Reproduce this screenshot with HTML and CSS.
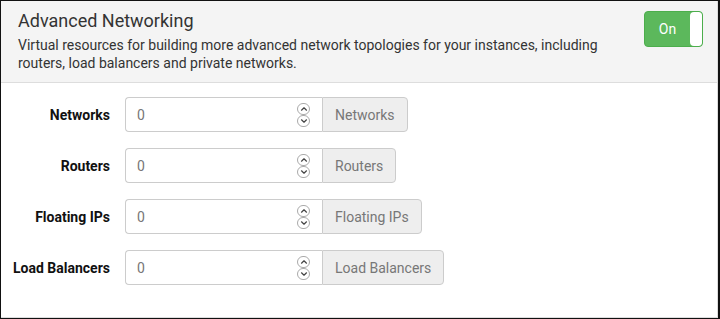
FILE: index.html
```html
<!DOCTYPE html>
<html lang="en">
<head>
  <meta charset="UTF-8" />
  <title>Advanced Networking</title>
  <link rel="stylesheet" href="styles.css">
</head>
<body>
  <div class="frame">
    <div class="panel">
      <div class="panel-head">
        <div class="head-text">
          <h2>Advanced Networking</h2>
          <p>Virtual resources for building more advanced network topologies for your instances, including routers, load balancers and private networks.</p>
        </div>
        <div class="toggle">
          <span class="toggle-label">On</span>
          <span class="toggle-knob"></span>
        </div>
      </div>

      <div class="panel-body">
        <label for="networks">Networks</label>
        <div class="input-group">
          <div class="field">
            <input type="number" id="networks" value="0" />
            <span class="spinner">
              <span class="spin"><svg viewBox="0 0 8 6" width="8" height="6"><path d="M1.5 4.2 L4 1.8 L6.5 4.2" /></svg></span>
              <span class="spin"><svg viewBox="0 0 8 6" width="8" height="6"><path d="M1.5 1.8 L4 4.2 L6.5 1.8" /></svg></span>
            </span>
          </div>
          <span class="addon">Networks</span>
        </div>

        <label for="routers">Routers</label>
        <div class="input-group">
          <div class="field">
            <input type="number" id="routers" value="0" />
            <span class="spinner">
              <span class="spin"><svg viewBox="0 0 8 6" width="8" height="6"><path d="M1.5 4.2 L4 1.8 L6.5 4.2" /></svg></span>
              <span class="spin"><svg viewBox="0 0 8 6" width="8" height="6"><path d="M1.5 1.8 L4 4.2 L6.5 1.8" /></svg></span>
            </span>
          </div>
          <span class="addon">Routers</span>
        </div>

        <label for="fips">Floating IPs</label>
        <div class="input-group">
          <div class="field">
            <input type="number" id="fips" value="0" />
            <span class="spinner">
              <span class="spin"><svg viewBox="0 0 8 6" width="8" height="6"><path d="M1.5 4.2 L4 1.8 L6.5 4.2" /></svg></span>
              <span class="spin"><svg viewBox="0 0 8 6" width="8" height="6"><path d="M1.5 1.8 L4 4.2 L6.5 1.8" /></svg></span>
            </span>
          </div>
          <span class="addon">Floating IPs</span>
        </div>

        <label for="lbs">Load Balancers</label>
        <div class="input-group">
          <div class="field">
            <input type="number" id="lbs" value="0" />
            <span class="spinner">
              <span class="spin"><svg viewBox="0 0 8 6" width="8" height="6"><path d="M1.5 4.2 L4 1.8 L6.5 4.2" /></svg></span>
              <span class="spin"><svg viewBox="0 0 8 6" width="8" height="6"><path d="M1.5 1.8 L4 4.2 L6.5 1.8" /></svg></span>
            </span>
          </div>
          <span class="addon">Load Balancers</span>
        </div>
      </div>
    </div>
  </div>
</body>
</html>
```

FILE: styles.css
```css
html, body {
  margin: 0;
  height: 100%;
}
body {
  font-family: Roboto, "Liberation Sans", sans-serif;
  color: #333;
  background: #fff;
}
.frame {
  box-sizing: border-box;
  height: 319px;
  border: 1px solid #111;
  border-right-width: 2px;
}
.panel {
  box-sizing: border-box;
  height: 100%;
  border: 1px solid #ddd;
  border-top: none;
  border-left: none;
}
.panel-head {
  display: flex;
  justify-content: space-between;
  align-items: flex-start;
  background: #f4f4f4;
  border-bottom: 1px solid #ddd;
  padding: 9px 14px 10px 17px;
}
.head-text h2 {
  margin: 0 0 4px;
  font-size: 18px;
  font-weight: 400;
  line-height: 22px;
}
.head-text p {
  margin: 0;
  font-size: 14px;
  line-height: 18px;
  max-width: 600px;
}
.toggle {
  display: flex;
  box-sizing: border-box;
  width: 59px;
  height: 36px;
  margin-top: 1px;
  background: #5cb85c;
  border: 1px solid #4cae4c;
  border-radius: 4px;
  overflow: hidden;
}
.toggle-label {
  flex: 1;
  color: #fff;
  font-size: 14px;
  line-height: 34px;
  text-align: center;
}
.toggle-knob {
  width: 12px;
  background: #fff;
  border-radius: 4px 3px 3px 4px;
}
.panel-body {
  display: grid;
  grid-template-columns: 109px auto;
  justify-content: start;
  align-items: center;
  column-gap: 15px;
  row-gap: 16px;
  padding: 14px 0 0 0;
}
.panel-body label {
  font-size: 14px;
  font-weight: 700;
  color: #111;
  text-align: right;
}
.input-group {
  display: flex;
  height: 35px;
}
.field {
  position: relative;
}
.input-group input {
  box-sizing: border-box;
  width: 197px;
  height: 35px;
  padding: 0 30px 0 11px;
  font-family: inherit;
  font-size: 14px;
  color: #777;
  border: 1px solid #ccc;
  border-right: none;
  border-radius: 4px 0 0 4px;
  outline: none;
  -moz-appearance: textfield;
}
.input-group input::-webkit-inner-spin-button,
.input-group input::-webkit-outer-spin-button {
  -webkit-appearance: none;
  margin: 0;
}
.spinner {
  position: absolute;
  right: 12px;
  top: 50%;
  transform: translateY(-50%);
  display: flex;
  flex-direction: column;
}
.spin {
  box-sizing: border-box;
  display: flex;
  align-items: center;
  justify-content: center;
  width: 13px;
  height: 12px;
  border: 1px solid #aaa;
  border-radius: 6px;
  background: #fff;
}
.spin svg path {
  fill: none;
  stroke: #444;
  stroke-width: 1.2;
  stroke-linecap: round;
  stroke-linejoin: round;
}
.addon {
  display: flex;
  align-items: center;
  padding: 0 12px;
  font-size: 14px;
  color: #777;
  background: #eee;
  border: 1px solid #ccc;
  border-radius: 0 4px 4px 0;
}
```
